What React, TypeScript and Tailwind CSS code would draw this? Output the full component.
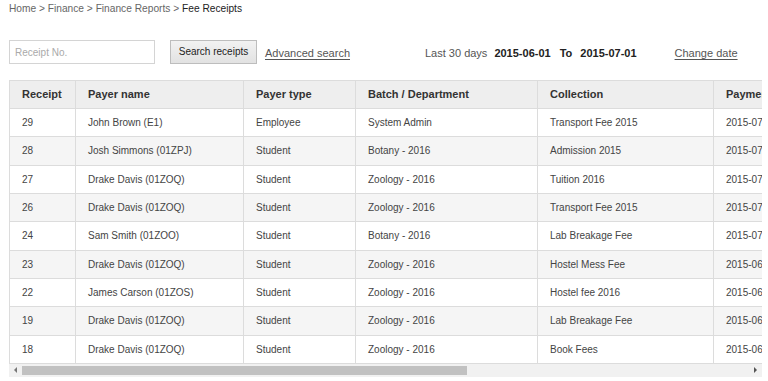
import React from "react";

const rows = [
  ["29", "John Brown (E1)", "Employee", "System Admin", "Transport Fee 2015", "2015-07-01"],
  ["28", "Josh Simmons (01ZPJ)", "Student", "Botany - 2016", "Admission 2015", "2015-07-01"],
  ["27", "Drake Davis (01ZOQ)", "Student", "Zoology - 2016", "Tuition 2016", "2015-07-01"],
  ["26", "Drake Davis (01ZOQ)", "Student", "Zoology - 2016", "Transport Fee 2015", "2015-07-01"],
  ["24", "Sam Smith (01ZOO)", "Student", "Botany - 2016", "Lab Breakage Fee", "2015-07-01"],
  ["23", "Drake Davis (01ZOQ)", "Student", "Zoology - 2016", "Hostel Mess Fee", "2015-06-30"],
  ["22", "James Carson (01ZOS)", "Student", "Zoology - 2016", "Hostel fee 2016", "2015-06-30"],
  ["19", "Drake Davis (01ZOQ)", "Student", "Zoology - 2016", "Lab Breakage Fee", "2015-06-29"],
  ["18", "Drake Davis (01ZOQ)", "Student", "Zoology - 2016", "Book Fees", "2015-06-29"],
];

const widths = [66, 168, 112, 182, 176, 520];
const headers = ["Receipt", "Payer name", "Payer type", "Batch / Department", "Collection", "Payment date"];

export default function App() {
  return (
    <div className="w-[768px] h-[381px] bg-white overflow-hidden text-[#444]" style={{ fontFamily: '"Liberation Sans", Arial, sans-serif' }}>
      <div className="pl-[9px] pt-[2px] h-[14px] text-[10.2px] leading-[14px] text-[#666]">
        Home &gt; Finance &gt; Finance Reports &gt; <span className="text-[#222]">Fee Receipts</span>
      </div>
      <div className="flex items-center h-[24px] mt-[26px] pl-[9px]">
        <div className="w-[146px] h-[24px] border border-[#d4d4d4] bg-white flex items-center pl-[5px] text-[10px] text-[#aaa]">
          Receipt No.
        </div>
        <div className="ml-[15px] w-[87px] h-[24px] border border-[#bdbdbd] bg-gradient-to-b from-[#f2f2f2] to-[#e2e2e2] flex items-center justify-center text-[10px] text-[#222] pb-[1px]">
          Search receipts
        </div>
        <div className="ml-[8px] mt-[3px] text-[11px] text-[#555] underline underline-offset-2">Advanced search</div>
        <div className="ml-[75px] mt-[3px] flex items-center text-[11px] text-[#555]">
          <span>Last 30 days</span>
          <span className="ml-[7px] font-bold text-[#222]">2015-06-01</span>
          <span className="ml-[9px] font-bold text-[#222]">To</span>
          <span className="ml-[8px] font-bold text-[#222]">2015-07-01</span>
          <span className="ml-[38px] underline underline-offset-2">Change date</span>
        </div>
      </div>
      <div className="ml-[9px] mt-[16px] w-[753px] overflow-hidden">
        <table className="table-fixed border-collapse" style={{ width: widths.reduce((a, b) => a + b, 0) }}>
          <colgroup>
            {widths.map((w, i) => (
              <col key={i} style={{ width: w }} />
            ))}
          </colgroup>
          <thead>
            <tr className="h-[28px] bg-[#eeeeee]">
              {headers.map((h) => (
                <th key={h} className="border border-[#dcdcdc] text-left font-bold text-[11px] text-[#333] pl-[12px] whitespace-nowrap">
                  {h}
                </th>
              ))}
            </tr>
          </thead>
          <tbody>
            {rows.map((r, i) => (
              <tr key={i} className={`h-[28.33px] ${i % 2 === 1 ? "bg-[#f5f5f5]" : "bg-white"}`}>
                {r.map((c, j) => (
                  <td key={j} className="border border-[#dcdcdc] text-[10px] text-[#444] pl-[12px] whitespace-nowrap">
                    {c}
                  </td>
                ))}
              </tr>
            ))}
          </tbody>
        </table>
      </div>
      <div className="ml-[9px] w-[753px] h-[13px] bg-[#f1f1f1] flex items-center">
        <div className="w-[13px] h-[13px] flex items-center justify-center">
          <div className="w-0 h-0 border-y-[3px] border-y-transparent border-r-[3px] border-r-[#777]" />
        </div>
        <div className="w-[445px] h-[9px] bg-[#c1c1c1]" />
        <div className="flex-1" />
        <div className="w-[13px] h-[13px] flex items-center justify-center">
          <div className="w-0 h-0 border-y-[3px] border-y-transparent border-l-[3px] border-l-[#555]" />
        </div>
      </div>
    </div>
  );
}
